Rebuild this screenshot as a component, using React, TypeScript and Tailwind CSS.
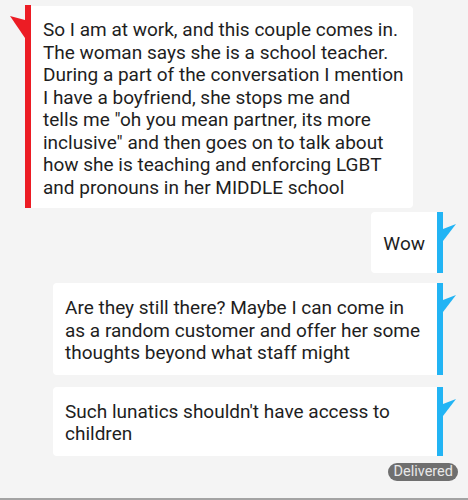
const incoming = [
  "So I am at work, and this couple comes in.",
  "The woman says she is a school teacher.",
  "During a part of the conversation I mention",
  "I have a boyfriend, she stops me and",
  'tells me "oh you mean partner, its more',
  'inclusive" and then goes on to talk about',
  "how she is teaching and enforcing LGBT",
  "and pronouns in her MIDDLE school",
];

const outgoing = [
  { lines: ["Wow"], mt: "mt-[4px]", box: "h-[61px]" },
  {
    lines: [
      "Are they still there? Maybe I can come in",
      "as a random customer and offer her some",
      "thoughts beyond what staff might",
    ],
    mt: "mt-[10px]",
    box: "w-[384px]",
  },
  {
    lines: ["Such lunatics shouldn't have access to", "children"],
    mt: "mt-[12px]",
    box: "w-[384px]",
  },
];

function Lines({ lines }: { lines: string[] }) {
  return (
    <>
      {lines.map((l) => (
        <span key={l} className="block whitespace-nowrap">
          {l}
        </span>
      ))}
    </>
  );
}

export default function App() {
  return (
    <div
      className="w-[468px] h-[500px] bg-[#f4f4f4] flex flex-col border-b-2 border-[#a3a3a3] text-[19px] leading-[22.5px] text-[#1e1e1e] overflow-hidden"
      style={{ fontFamily: "Roboto, 'Liberation Sans', sans-serif" }}
    >
      {/* incoming */}
      <div className="flex pl-[10px] mt-[5px]">
        <svg width="15" height="40" className="shrink-0">
          <polygon points="0,11 15,15 15,33" fill="#ec1c24" />
        </svg>
        <div className="w-[6px] bg-[#ec1c24] shrink-0" />
        <div className="w-[382px] bg-white rounded-r-[4px] pl-[12px] pt-[13px] pb-[9px] mt-[1px]">
          <Lines lines={incoming} />
        </div>
      </div>

      {/* outgoing */}
      {outgoing.map((m, i) => (
        <div key={i} className={`flex justify-end pr-[12px] ${m.mt}`}>
          <div
            className={`bg-white rounded-l-[4px] px-[12px] pt-[14px] pb-[10px] flex flex-col justify-center ${m.box}`}
          >
            <Lines lines={m.lines} />
          </div>
          <div className="w-[6px] bg-[#22b4f4] shrink-0" />
          <svg width="13" height="40" className="shrink-0">
            <polygon points="0,17 13,12 0,29" fill="#22b4f4" />
          </svg>
        </div>
      ))}

      <div className="flex justify-end pr-[10px] mt-[7px]">
        <span className="bg-[#6f6f6f] text-[#e8e8e8] text-[14.5px] leading-[18px] px-[5px] rounded-full">
          Delivered
        </span>
      </div>
    </div>
  );
}
